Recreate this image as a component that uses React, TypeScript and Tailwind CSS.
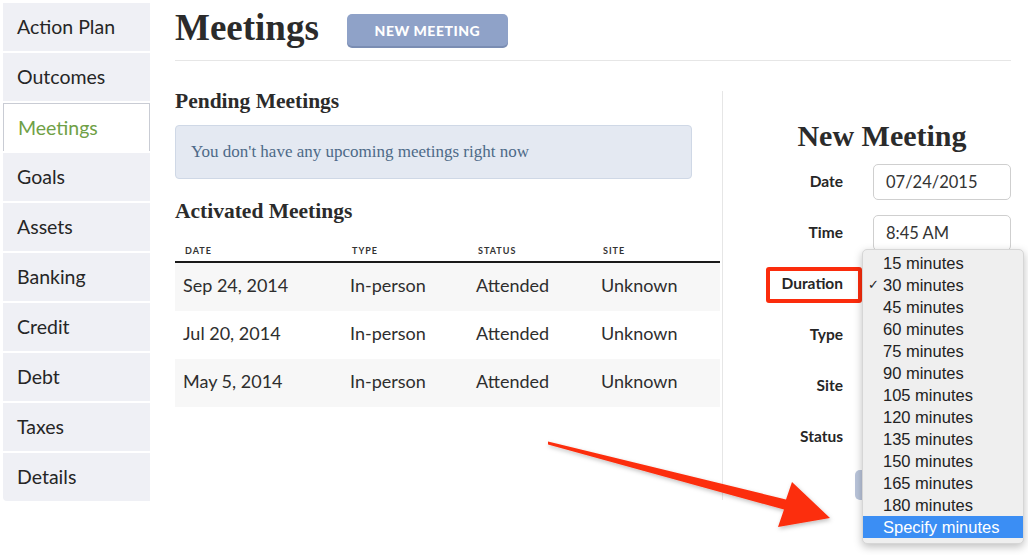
import React from "react";

const navItems = [
    "Action Plan",
    "Outcomes",
    "Meetings",
    "Goals",
    "Assets",
    "Banking",
    "Credit",
    "Debt",
    "Taxes",
    "Details",
];

const meetings = [
    { date: "Sep 24, 2014", type: "In-person", status: "Attended", site: "Unknown" },
    { date: "Jul 20, 2014", type: "In-person", status: "Attended", site: "Unknown" },
    { date: "May 5, 2014", type: "In-person", status: "Attended", site: "Unknown" },
];

const durations = [
    "15 minutes",
    "30 minutes",
    "45 minutes",
    "60 minutes",
    "75 minutes",
    "90 minutes",
    "105 minutes",
    "120 minutes",
    "135 minutes",
    "150 minutes",
    "165 minutes",
    "180 minutes",
    "Specify minutes",
];

const sans = "font-['Lato',sans-serif]";
const serif = "font-['Liberation_Serif',serif]";

const Sidebar: React.FC = () => (
    <div className="w-[150px] shrink-0 pl-[3px] pt-[3px] flex flex-col gap-[2px]">
        {navItems.map((item, i) => {
            const active = item === "Meetings";
            return (
                <div
                    key={item}
                    className={
                        active
                            ? "h-[48px] flex items-center pl-[14px] bg-white border-l border-t border-r border-[#c9ccd4] text-[19.5px] text-[#6fa046]"
                            : `h-[48px] flex items-center pl-[14px] bg-[#eff0f5] text-[19.5px] text-[#262626] ${
                                  i === navItems.length - 1 ? "rounded-bl-[4px]" : ""
                              }`
                    }
                >
                    {item}
                </div>
            );
        })}
    </div>
);

// rows under the open dropdown keep their boxes but no text
const FormRow: React.FC<{ label: string; value?: string; highlight?: boolean }> = ({
    label,
    value,
    highlight,
}) => (
    <div className="relative flex items-center h-[36px] mb-[15px]">
        <div className="w-[90px] text-right text-[15.5px] font-bold text-[#262626]">{label}</div>
        <div className="ml-[30px] w-[138px] h-[36px] border border-[#cfcfcf] rounded-[5px] bg-white flex items-center px-[12px] text-[16.5px] text-[#333]">
            {value}
        </div>
        {highlight && (
            <div className="absolute left-[13px] top-[1px] w-[96px] h-[36px] border-[4px] border-[#fb2c0c] rounded-[3px]" />
        )}
    </div>
);

const App: React.FC = () => {
    return (
        <div className={`relative w-[1028px] h-[555px] overflow-hidden bg-white flex ${sans}`}>
            <Sidebar />

            <div className="ml-[25px] w-[836px]">
                <div className="h-[61px] border-b border-[#e6e6e6] flex items-start pt-[6px]">
                    <h1 className={`${serif} text-[37px] leading-[44px] font-bold text-[#2b2b2b]`}>
                        Meetings
                    </h1>
                    <button className="ml-[28px] mt-[8px] w-[161px] h-[32px] rounded-[5px] bg-[#8fa2c8] shadow-[0_2px_0_#7a8db3] text-white text-[14px] font-black tracking-[0.5px]">
                        NEW MEETING
                    </button>
                </div>

                <div className="flex">
                    <div className="mt-[30px] w-[548px] pr-[2px] pb-[2px] border-r border-[#e6e6e6]">
                        <h2 className={`${serif} -mt-[2px] text-[21.5px] leading-[24px] font-bold text-[#2b2b2b]`}>
                            Pending Meetings
                        </h2>
                        <div className="mt-[12px] w-[517px] h-[54px] rounded-[4px] bg-[#e4e9f2] border border-[#cfd8e6] flex items-center pl-[15px]">
                            <span className={`${serif} text-[17px] text-[#4d6a88]`}>
                                You don't have any upcoming meetings right now
                            </span>
                        </div>
                        <h2 className={`${serif} mt-[20px] text-[21.5px] leading-[24px] font-bold text-[#2b2b2b]`}>
                            Activated Meetings
                        </h2>
                        <div className="grid grid-cols-[175px_126px_125px_1fr] h-[40px] items-end pb-[4px] border-b-2 border-[#1a1a1a] text-[9px] font-bold tracking-[1px] text-[#333]">
                            <div className="pl-[10px]">DATE</div>
                            <div className="pl-[2px]">TYPE</div>
                            <div className="pl-[2px]">STATUS</div>
                            <div className="pl-[2px]">SITE</div>
                        </div>
                        {meetings.map((m, i) => (
                            <div
                                key={m.date}
                                className={`grid grid-cols-[175px_126px_125px_1fr] h-[48px] items-center pb-[3px] text-[18px] text-[#2e2e2e] ${
                                    i % 2 === 0 ? "bg-[#f7f7f7]" : "bg-white"
                                }`}
                            >
                                <div className="pl-[8px]">{m.date}</div>
                                <div>{m.type}</div>
                                <div>{m.status}</div>
                                <div>{m.site}</div>
                            </div>
                        ))}
                    </div>

                    <div className="flex-1 pl-[30px] pt-[57px]">
                        <div className="w-[258px]">
                            <h2 className={`${serif} text-center text-[30px] leading-[36px] font-bold text-[#2b2b2b]`}>
                                New Meeting
                            </h2>
                            <div className="mt-[10px]">
                                <FormRow label="Date" value="07/24/2015" />
                                <FormRow label="Time" value="8:45 AM" />
                                <FormRow label="Duration" highlight />
                                <FormRow label="Type" />
                                <FormRow label="Site" />
                                <FormRow label="Status" />
                            </div>
                            <div className="pl-[102px] mt-[5px]">
                                <div className="w-[110px] h-[30px] rounded-[5px] bg-[#b9c4da]" />
                            </div>
                        </div>
                    </div>
                </div>
            </div>

            {/* open duration select */}
            <div className="absolute left-[862px] top-[249px] w-[162px] pt-[2px] pb-[5px] rounded-[5px] bg-[#efefef] border border-[#d6d6d6] shadow-[0_3px_8px_rgba(0,0,0,0.25)] font-['Liberation_Sans',sans-serif]">
                {durations.map((d) => {
                    const selected = d === "Specify minutes";
                    return (
                        <div
                            key={d}
                            className={`relative h-[22px] flex items-center pl-[20px] text-[16.5px] ${
                                selected ? "bg-[#3b8ef4] text-white" : "text-[#222]"
                            }`}
                        >
                            {d === "30 minutes" && (
                                <span className="absolute left-[5px] text-[13px]">✓</span>
                            )}
                            {d}
                        </div>
                    );
                })}
            </div>

            {/* annotation arrow */}
            <svg
                className="absolute left-0 top-0 pointer-events-none"
                width="1028"
                height="555"
                viewBox="0 0 1028 555"
            >
                <defs>
                    <filter id="arrowShadow" x="-10%" y="-30%" width="120%" height="160%">
                        <feDropShadow dx="1" dy="2" stdDeviation="2" floodColor="#000" floodOpacity="0.25" />
                    </filter>
                </defs>
                <polygon
                    points="548,441.5 786,499.5 792,482 830,518 778,527 784,509.5 548,444.5"
                    fill="#fc2d0c"
                    filter="url(#arrowShadow)"
                />
            </svg>
        </div>
    );
};

export default App;
